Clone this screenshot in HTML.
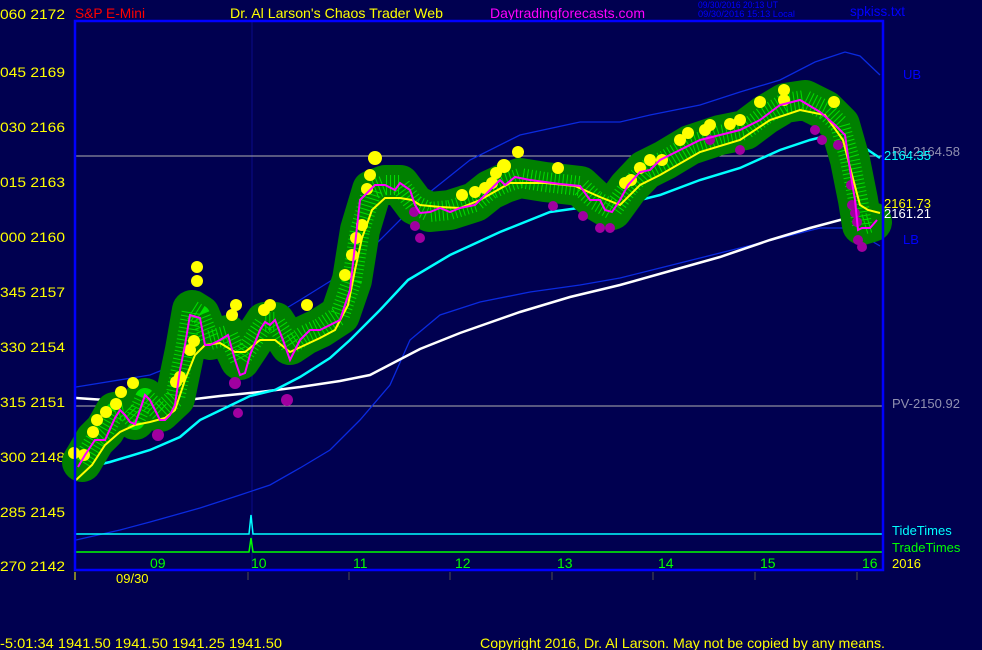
<!DOCTYPE html>
<html><head><meta charset="utf-8"><style>
html,body{margin:0;padding:0;background:#000050;}
svg{display:block}
text{font-family:"Liberation Sans",sans-serif;}
</style></head><body>
<svg width="982" height="650" viewBox="0 0 982 650" xmlns="http://www.w3.org/2000/svg">
<rect width="982" height="650" fill="#000050"/>
<g font-size="14">
<text x="0" y="19" fill="#ffff00" textLength="65" lengthAdjust="spacingAndGlyphs">060  2172</text>
<text x="75" y="18" fill="#ff0000" textLength="70" lengthAdjust="spacingAndGlyphs">S&amp;P E-Mini</text>
<text x="230" y="18" fill="#ffff00" textLength="213" lengthAdjust="spacingAndGlyphs">Dr. Al Larson's Chaos Trader Web</text>
<text x="490" y="18" fill="#ff00ff" textLength="155" lengthAdjust="spacingAndGlyphs">Daytradingforecasts.com</text>
<text x="850" y="16" fill="#0000ff" textLength="55" lengthAdjust="spacingAndGlyphs">spkiss.txt</text>
</g>
<text x="698" y="8" fill="#0000ff" font-size="9" textLength="80" lengthAdjust="spacingAndGlyphs">09/30/2016 20:13 UT</text>
<text x="698" y="17" fill="#0000ff" font-size="9" textLength="97" lengthAdjust="spacingAndGlyphs">09/30/2016 15:13 Local</text>
<g fill="#ffff00" font-size="14">
<text x="0" y="77" textLength="65" lengthAdjust="spacingAndGlyphs">045  2169</text>
<text x="0" y="132" textLength="65" lengthAdjust="spacingAndGlyphs">030  2166</text>
<text x="0" y="187" textLength="65" lengthAdjust="spacingAndGlyphs">015  2163</text>
<text x="0" y="242" textLength="65" lengthAdjust="spacingAndGlyphs">000  2160</text>
<text x="0" y="297" textLength="65" lengthAdjust="spacingAndGlyphs">345  2157</text>
<text x="0" y="352" textLength="65" lengthAdjust="spacingAndGlyphs">330  2154</text>
<text x="0" y="407" textLength="65" lengthAdjust="spacingAndGlyphs">315  2151</text>
<text x="0" y="462" textLength="65" lengthAdjust="spacingAndGlyphs">300  2148</text>
<text x="0" y="517" textLength="65" lengthAdjust="spacingAndGlyphs">285  2145</text>
<text x="0" y="571" textLength="65" lengthAdjust="spacingAndGlyphs">270  2142</text>
</g>
<line x1="252" y1="21" x2="252" y2="568" stroke="#0a0a8a" stroke-width="1"/>
<line x1="75" y1="156" x2="883" y2="156" stroke="#b0b0b0" stroke-width="1"/>
<line x1="75" y1="406" x2="883" y2="406" stroke="#b0b0b0" stroke-width="1"/>
<polyline fill="none" stroke="#0a2ae0" stroke-width="1.3" points="76,387 150,375 200,355 250,330 300,300 345,272 380,240 420,200 470,160 520,135 580,122 620,122 650,115 700,105 740,92 780,80 815,62 845,52 860,56 880,75"/>
<polyline fill="none" stroke="#0a2ae0" stroke-width="1.3" points="76,540 120,530 150,522 200,508 240,495 270,485 300,468 330,450 360,420 390,385 410,340 440,315 480,302 530,292 580,285 620,278 660,268 700,258 740,248 780,238 820,228 850,228 870,240 880,246"/>
<polyline fill="none" stroke="#ffffff" stroke-width="2.5" points="76,398 120,401 170,402 220,396 260,392 300,387 340,381 370,375 395,362 420,349 460,333 520,312 570,297 620,285 670,271 720,257 770,240 810,228 840,220 860,216 880,216"/>
<polyline fill="none" stroke="#00ffff" stroke-width="2.5" points="76,470 110,462 150,450 180,437 200,420 225,408 250,396 275,390 300,377 330,358 350,340 380,310 408,280 450,255 500,232 550,212 600,205 620,205 660,195 700,180 740,168 780,150 810,140 830,135 850,137 865,148 880,158"/>
<polyline fill="none" stroke="#008000" stroke-width="40" stroke-linejoin="round" stroke-linecap="round" points="82,462 95,440 105,430 115,412 125,410 135,420 145,398 160,412 175,398 185,350 192,310 200,315 210,340 228,335 240,360 250,345 265,322 275,322 290,345 305,335 320,328 340,315 352,280 360,230 372,190 385,185 400,185 415,205 430,212 450,210 475,202 490,190 505,183 520,178 545,182 580,186 595,200 612,210 628,188 645,170 665,160 690,145 720,135 745,130 765,115 785,103 805,100 825,110 840,125 850,160 858,200 862,225 872,222"/>
<polyline fill="none" stroke="#00e000" stroke-width="20" stroke-dasharray="1 3" stroke-linejoin="round" points="82,462 95,440 105,430 115,412 125,410 135,420 145,398 160,412 175,398 185,350 192,310 200,315 210,340 228,335 240,360 250,345 265,322 275,322 290,345 305,335 320,328 340,315 352,280 360,230 372,190 385,185 400,185 415,205 430,212 450,210 475,202 490,190 505,183 520,178 545,182 580,186 595,200 612,210 628,188 645,170 665,160 690,145 720,135 745,130 765,115 785,103 805,100 825,110 840,125 850,160 858,200 862,225 872,222"/>
<g fill="#a000a0">
<circle cx="158" cy="435" r="6"/><circle cx="235" cy="383" r="6"/><circle cx="238" cy="413" r="5"/><circle cx="287" cy="400" r="6"/>
<circle cx="414" cy="212" r="5"/><circle cx="415" cy="226" r="5"/><circle cx="420" cy="238" r="5"/>
<circle cx="553" cy="206" r="5"/><circle cx="583" cy="216" r="5"/><circle cx="600" cy="228" r="5"/><circle cx="610" cy="228" r="5"/>
<circle cx="710" cy="140" r="5"/><circle cx="740" cy="150" r="5"/><circle cx="815" cy="130" r="5"/><circle cx="822" cy="140" r="5"/><circle cx="838" cy="145" r="5"/>
<circle cx="851" cy="185" r="5"/><circle cx="852" cy="205" r="5"/><circle cx="855" cy="213" r="5"/><circle cx="857" cy="222" r="5"/><circle cx="858" cy="240" r="5"/><circle cx="862" cy="247" r="5"/>
</g>
<g fill="#ffff00">
<circle cx="74" cy="453" r="6"/><circle cx="84" cy="455" r="6"/><circle cx="93" cy="432" r="6"/><circle cx="97" cy="420" r="6"/><circle cx="106" cy="412" r="6"/><circle cx="116" cy="404" r="6"/><circle cx="121" cy="392" r="6"/><circle cx="133" cy="383" r="6"/>
<circle cx="176" cy="382" r="6"/><circle cx="180" cy="377" r="6"/><circle cx="190" cy="350" r="6"/><circle cx="194" cy="341" r="6"/><circle cx="197" cy="281" r="6"/><circle cx="197" cy="267" r="6"/>
<circle cx="232" cy="315" r="6"/><circle cx="236" cy="305" r="6"/><circle cx="264" cy="310" r="6"/><circle cx="270" cy="305" r="6"/>
<circle cx="307" cy="305" r="6"/><circle cx="345" cy="275" r="6"/><circle cx="352" cy="255" r="6"/><circle cx="356" cy="238" r="6"/><circle cx="362" cy="225" r="6"/><circle cx="367" cy="189" r="6"/><circle cx="370" cy="175" r="6"/><circle cx="375" cy="158" r="7"/>
<circle cx="462" cy="195" r="6"/><circle cx="475" cy="192" r="6"/><circle cx="485" cy="188" r="6"/><circle cx="492" cy="183" r="6"/><circle cx="496" cy="173" r="6"/><circle cx="504" cy="166" r="7"/><circle cx="518" cy="152" r="6"/><circle cx="558" cy="168" r="6"/>
<circle cx="625" cy="183" r="6"/><circle cx="631" cy="180" r="6"/><circle cx="640" cy="168" r="6"/><circle cx="650" cy="160" r="6"/><circle cx="662" cy="160" r="6"/><circle cx="680" cy="140" r="6"/><circle cx="688" cy="133" r="6"/>
<circle cx="705" cy="130" r="6"/><circle cx="710" cy="125" r="6"/><circle cx="730" cy="124" r="6"/><circle cx="740" cy="120" r="6"/><circle cx="760" cy="102" r="6"/><circle cx="784" cy="90" r="6"/><circle cx="784" cy="100" r="6"/><circle cx="834" cy="102" r="6"/>
</g>
<polyline fill="none" stroke="#ffff00" stroke-width="2" points="76,480 92,465 105,445 120,432 135,425 150,422 165,418 175,410 185,380 195,355 205,345 220,343 235,352 245,352 260,340 275,340 290,352 305,345 320,338 335,330 348,305 355,270 362,238 372,210 385,198 400,198 412,200 420,205 440,207 460,208 480,200 510,183 545,183 575,186 600,197 620,205 640,185 660,175 700,152 740,140 770,120 800,110 825,115 843,140 852,175 860,205 868,210 880,213"/>
<polyline fill="none" stroke="#ff00ff" stroke-width="2" points="78,467 85,455 95,440 105,440 115,418 120,410 125,415 130,422 135,424 140,410 145,395 150,400 155,410 160,420 165,420 170,415 175,405 180,370 185,345 190,315 200,318 205,345 210,345 220,340 228,335 235,360 240,375 245,373 250,355 260,330 265,322 270,325 275,320 283,340 290,360 300,340 310,330 320,330 330,325 340,320 350,290 355,245 360,200 375,185 385,185 395,190 400,183 410,190 415,205 420,213 430,212 440,208 450,212 460,208 475,205 490,190 500,180 505,185 515,177 520,178 530,180 545,182 560,184 580,186 590,200 600,200 605,210 612,212 620,200 628,185 640,172 650,170 660,160 680,150 700,140 720,135 740,130 760,120 780,105 800,100 820,112 835,125 845,135 850,170 855,200 858,230 862,228 870,228 877,220"/>
<polyline fill="none" stroke="#00ffff" stroke-width="1.5" points="75,534 249,534 251,515 253,534 883,534"/>
<polyline fill="none" stroke="#00ff00" stroke-width="1.5" points="75,552 249,552 251,538 253,552 883,552"/>
<g fill="#00ff00" font-size="14">
<text x="150" y="568">09</text><text x="251" y="568">10</text><text x="353" y="568">11</text><text x="455" y="568">12</text><text x="557" y="568">13</text><text x="658" y="568">14</text><text x="760" y="568">15</text><text x="862" y="568">16</text>
</g>
<rect x="75" y="21" width="808" height="549" fill="none" stroke="#0000ff" stroke-width="2.5"/>
<g stroke="#505050" stroke-width="1">
<line x1="75" y1="572" x2="75" y2="580" stroke="#ffff00"/><line x1="248" y1="572" x2="248" y2="580"/><line x1="349" y1="572" x2="349" y2="580"/><line x1="450" y1="572" x2="450" y2="580"/><line x1="552" y1="572" x2="552" y2="580"/><line x1="653" y1="572" x2="653" y2="580"/><line x1="755" y1="572" x2="755" y2="580"/><line x1="857" y1="572" x2="857" y2="580"/>
</g>
<text x="116" y="583" fill="#ffff00" font-size="13">09/30</text>
<g font-size="13">
<text x="903" y="79" fill="#0000ff">UB</text>
<text x="892" y="156" fill="#9090b0">R1-2164.58</text>
<text x="884" y="160" fill="#00ffff">2164.35</text>
<text x="884" y="208" fill="#ffff00">2161.73</text>
<text x="884" y="218" fill="#ffffff">2161.21</text>
<text x="903" y="244" fill="#0000ff">LB</text>
<text x="892" y="408" fill="#9090b0">PV-2150.92</text>
<text x="892" y="535" fill="#00ffff">TideTimes</text>
<text x="892" y="552" fill="#00ff00">TradeTimes</text>
<text x="892" y="568" fill="#ffff00">2016</text>
</g>
<text x="0" y="648" fill="#ffff00" font-size="14" textLength="282" lengthAdjust="spacingAndGlyphs">-5:01:34  1941.50 1941.50 1941.25 1941.50</text>
<text x="480" y="648" fill="#ffff00" font-size="14" textLength="405" lengthAdjust="spacingAndGlyphs">Copyright 2016, Dr. Al Larson. May not be copied by any means.</text>
</svg>
</body></html>
